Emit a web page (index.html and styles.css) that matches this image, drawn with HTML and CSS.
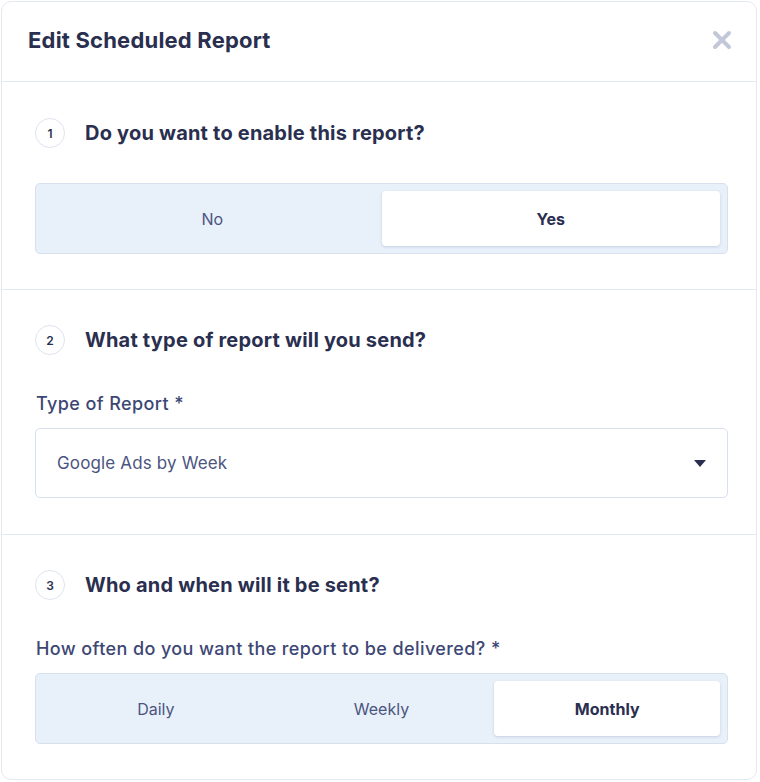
FILE: index.html
```html
<!DOCTYPE html>
<html lang="en">
<head>
    <meta charset="UTF-8">
    <meta name="viewport" content="width=device-width, initial-scale=1.0">
    <title>Edit Scheduled Report</title>
    <link rel="stylesheet" href="styles.css">
</head>
<body>

    <div class="modal">
        <div class="modal-header">
            <h1>Edit Scheduled Report</h1>
            <button class="close" aria-label="Close">
                <svg width="20" height="20" viewBox="0 0 20 20">
                    <path d="M3 3 L17 17 M17 3 L3 17" stroke="#c3c8d9" stroke-width="4" stroke-linecap="round"/>
                </svg>
            </button>
        </div>

        <!-- Schritt 1 -->
        <div class="section">
            <div class="step">
                <span class="step-num">1</span>
                <h2>Do you want to enable this report?</h2>
            </div>
            <div class="segment">
                <div class="seg-item">No</div>
                <div class="seg-item active">Yes</div>
            </div>
        </div>

        <!-- Schritt 2 -->
        <div class="section">
            <div class="step">
                <span class="step-num">2</span>
                <h2>What type of report will you send?</h2>
            </div>
            <label class="field-label">Type of Report *</label>
            <div class="select">
                <span>Google Ads by Week</span>
                <svg width="12" height="7" viewBox="0 0 12 7">
                    <path d="M0 0 H12 L6 7 Z" fill="#2a2f4f"/>
                </svg>
            </div>
        </div>

        <!-- Schritt 3 -->
        <div class="section">
            <div class="step">
                <span class="step-num">3</span>
                <h2>Who and when will it be sent?</h2>
            </div>
            <label class="field-label">How often do you want the report to be delivered? *</label>
            <div class="segment">
                <div class="seg-item">Daily</div>
                <div class="seg-item">Weekly</div>
                <div class="seg-item active">Monthly</div>
            </div>
        </div>
    </div>

</body>
</html>
```

FILE: styles.css
```css
body {
    margin: 0;
    padding: 1px;
    font-family: Inter, "Noto Sans", sans-serif;
    background-color: #fff;
    color: #2a2f4f;
}
.modal {
    width: 756px;
    border: 1px solid #e4e9f1;
    border-radius: 10px;
    background-color: #fff;
    box-sizing: border-box;
}
.modal-header {
    height: 80px;
    box-sizing: border-box;
    display: flex;
    align-items: center;
    justify-content: space-between;
    padding: 0 24px 4px 26px;
    border-bottom: 1px solid #e4e9f1;
}
.modal-header h1 {
    font-size: 22px;
    font-weight: 700;
    margin: 0;
    letter-spacing: 0.2px;
}
.close {
    border: none;
    background: none;
    padding: 0;
    width: 20px;
    height: 20px;
    cursor: pointer;
}
.close svg {
    display: block;
}
.section {
    padding: 35px 28px 35px 33px;
    border-bottom: 1px solid #e4e9f1;
}
.modal-header + .section {
    padding-top: 36px;
}
.section:last-child {
    border-bottom: none;
}
.step {
    display: flex;
    align-items: center;
    gap: 20px;
    height: 30px;
    margin-bottom: 35px;
}
.step-num {
    width: 30px;
    height: 30px;
    box-sizing: border-box;
    border: 1px solid #dde3ef;
    border-radius: 50%;
    display: flex;
    align-items: center;
    justify-content: center;
    font-size: 12px;
    font-weight: 600;
    flex-shrink: 0;
}
.step h2 {
    font-size: 20px;
    font-weight: 700;
    margin: 0;
    letter-spacing: 0.2px;
}
.field-label {
    display: block;
    font-size: 18px;
    font-weight: 500;
    color: #3d4774;
    line-height: 24px;
    letter-spacing: 0.4px;
    padding-top: 2px;
    margin: 0 0 12px 1px;
}
.segment {
    display: flex;
    padding: 7px;
    background-color: #e8f0fa;
    border: 1px solid #d7e1ee;
    border-radius: 5px;
}
.seg-item {
    flex: 1;
    height: 55px;
    display: flex;
    align-items: center;
    justify-content: center;
    font-size: 16px;
    color: #4b5580;
    border-radius: 4px;
}
.seg-item.active {
    background-color: #fff;
    color: #2a2f4f;
    font-weight: 700;
    box-shadow: 0 1px 3px rgba(40, 60, 110, 0.18);
}
.select {
    height: 70px;
    box-sizing: border-box;
    display: flex;
    align-items: center;
    justify-content: space-between;
    padding: 0 21px 0 21px;
    margin-bottom: 1px;
    border: 1px solid #d7e1ee;
    border-radius: 5px;
    font-size: 17px;
    letter-spacing: 0.15px;
    color: #4b5580;
}
```
